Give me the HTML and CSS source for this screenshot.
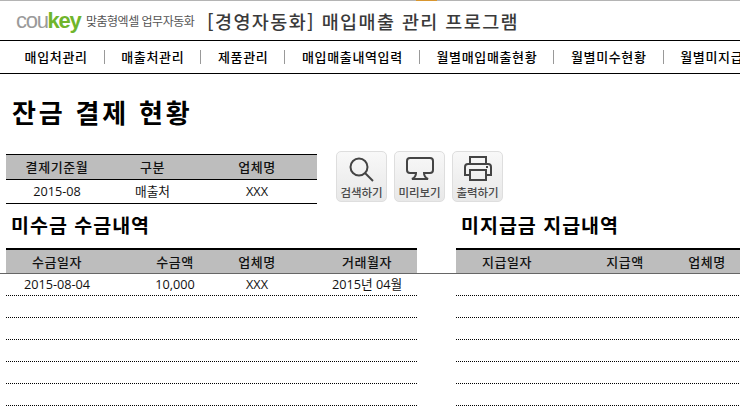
FILE: index.html
```html
<!DOCTYPE html>
<html lang="ko">
<head>
    <meta charset="UTF-8">
    <title>경영자동화</title>
    <link rel="stylesheet" href="styles.css">
</head>
<body>
    <div class="top_line"><div class="top_line_mark"></div></div>
    <div class="brand">
        <div class="brand_logo">cou<span>key</span></div>
        <div class="brand_sub">맞춤형엑셀 업무자동화</div>
        <div class="brand_title">[경영자동화] 매입매출 관리 프로그램</div>
    </div>
    <div class="menu">
        <div>매입처관리</div>
        <div>매출처관리</div>
        <div>제품관리</div>
        <div>매입매출내역입력</div>
        <div>월별매입매출현황</div>
        <div>월별미수현황</div>
        <div>월별미지급</div>
    </div>

    <h1 class="page_title">잔금 결제 현황</h1>

    <div class="filter">
        <div class="filter_table">
            <div class="filter_row filter_head">
                <div>결제기준월</div>
                <div>구분</div>
                <div>업체명</div>
            </div>
            <div class="filter_row">
                <div>2015-08</div>
                <div>매출처</div>
                <div>XXX</div>
            </div>
        </div>
        <div class="tools">
            <div class="tool">
                <svg width="30" height="30" viewBox="0 0 30 30"><circle cx="12" cy="12" r="8.500"/><path d="M18 18 L26 26"/></svg>
                <span>검색하기</span>
            </div>
            <div class="tool">
                <svg width="30" height="30" viewBox="0 0 30 30"><path d="M5 3 H25 Q28 3 28 6 V15 Q28 18 25 18 H19 Q19 22 23 24 H7 Q11 22 11 18 H5 Q2 18 2 15 V6 Q2 3 5 3 Z"/></svg>
                <span>미리보기</span>
            </div>
            <div class="tool">
                <svg width="30" height="30" viewBox="0 0 30 30"><path d="M7 9 V2 H23 V9"/><path d="M7 20 H2 V12 Q2 9 5 9 H25 Q28 9 28 12 V20 H23"/><path d="M7 15 H23 V25 H7 Z"/><path d="M23 12 H25"/></svg>
                <span>출력하기</span>
            </div>
        </div>
    </div>

    <div class="list_titles">
        <h2>미수금 수금내역</h2>
        <h2>미지급금 지급내역</h2>
    </div>
    <div class="list_heads">
        <div class="list_row list_head">
            <div>수금일자</div><div>수금액</div><div>업체명</div><div>거래월자</div>
        </div>
        <div class="list_row list_head">
            <div>지급일자</div><div>지급액</div><div>업체명</div><div></div>
        </div>
    </div>
    <div class="lists">
        <div class="list">
            <div class="list_row"><div>2015-08-04</div><div>10,000</div><div>XXX</div><div>2015년 04월</div></div>
            <div class="list_row"></div>
            <div class="list_row"></div>
            <div class="list_row"></div>
            <div class="list_row"></div>
            <div class="list_row"></div>
        </div>
        <div class="list">
            <div class="list_row"></div>
            <div class="list_row"></div>
            <div class="list_row"></div>
            <div class="list_row"></div>
            <div class="list_row"></div>
            <div class="list_row"></div>
        </div>
    </div>
</body>
</html>
```
FILE: styles.css
```css
html,body{
    margin: 0;
    height: 100%;
    overflow: hidden;
    background: #fff;
}

body{
    font-family: "Open Sans", "Noto Sans CJK KR", sans-serif;
    font-size: 12.7px;
    color: #111;
}

.top_line{
    height: 1px;
    background: #b4b4b4;
    padding-left: 416px;
}

.top_line_mark{
    width: 21px;
    height: 1px;
    background: #d8962f;
}

.brand{
    height: 39px;
    display: flex;
    align-items: center;
    padding-left: 16px;
}

.brand_logo{
    width: 70px;
    font-family: "Liberation Sans", sans-serif;
    font-size: 22px;
    letter-spacing: -1.3px;
    color: #9a9a9a;
}

.brand_logo span{
    color: #6fb52c;
    font-weight: bold;
}

.brand_sub{
    width: 121px;
    font-family: "Noto Sans CJK KR", sans-serif;
    font-size: 12px;
    letter-spacing: -0.5px;
    color: #555;
}

.brand_title{
    font-family: "Noto Sans CJK KR", sans-serif;
    font-size: 18.5px;
    font-weight: 500;
    letter-spacing: 1.4px;
    color: #3a3a3a;
    white-space: nowrap;
}

.menu{
    height: 32px;
    border-top: 1px solid #000;
    border-bottom: 1px solid #000;
    display: flex;
    align-items: center;
    padding-left: 8px;
    white-space: nowrap;
    font-family: "Noto Sans CJK KR", sans-serif;
    font-size: 13px;
    font-weight: 500;
    letter-spacing: 0.65px;
    color: #000;
}

.menu>div{
    height: 14px;
    line-height: 14px;
    padding: 0 16px 0 16.6px;
    border-right: 1px solid #999;
}

.menu>div:last-child{
    border-right: 0;
}

.page_title{
    margin: 0;
    height: 80px;
    padding: 22px 0 0 12px;
    box-sizing: border-box;
    font-family: "Noto Sans CJK KR", sans-serif;
    font-size: 26px;
    line-height: 32px;
    letter-spacing: 2.800px;
    color: #000;
}

.filter{
    display: flex;
    height: 59px;
    padding-left: 6px;
}

.filter_table{
    width: 311px;
    height: 48px;
    border-top: 1px solid #000;
    border-bottom: 1px solid #000;
}

.filter_row{
    display: grid;
    grid-template-columns: 102px 89px 120px;
    height: 22px;
    line-height: 22px;
    text-align: center;
}

.filter_head{
    height: 24px;
    line-height: 24px;
    background: #bdbdbd;
    border-bottom: 1px solid #000;
    font-family: "Noto Sans CJK KR", sans-serif;
    font-size: 13px;
    letter-spacing: 0.6px;
    font-weight: 500;
}

.tools{
    display: flex;
    gap: 7px;
    margin: -3px 0 0 19px;
    height: 51px;
}

.tool{
    width: 51px;
    height: 51px;
    box-sizing: border-box;
    border: 1px solid #dedede;
    border-radius: 5px;
    background: linear-gradient(#f8f8f8, #e8e8e8);
    display: flex;
    flex-direction: column;
    align-items: center;
    padding-top: 3px;
}

.tool svg{
    flex: none;
    fill: none;
    stroke: #444;
    stroke-width: 2;
}

.tool span{
    font-family: "Noto Sans CJK KR", sans-serif;
    font-size: 11.5px;
    line-height: 14px;
    font-weight: 500;
    letter-spacing: -0.1px;
    color: #4a4a4a;
    white-space: nowrap;
}

.list_titles{
    display: flex;
    height: 35px;
    padding-left: 11px;
}

.list_titles h2{
    width: 450px;
    flex: none;
    margin: 0;
    font-family: "Noto Sans CJK KR", sans-serif;
    font-size: 19.500px;
    line-height: 24px;
    letter-spacing: 1px;
    color: #000;
}

.list_heads{
    display: flex;
    gap: 39px;
    padding-left: 6px;
    border-bottom: 1px solid #666;
}

.list_row{
    display: grid;
    flex: none;
    width: 411px;
    box-sizing: border-box;
    height: 22px;
    line-height: 21px;
    grid-template-columns: 124px 90px 74px 123px;
    text-align: center;
    border-bottom: 1px dotted #000;
}

.list_row>div:first-child{
    padding-right: 22px;
}

.list_row>div:last-child{
    padding-left: 23px;
}

.list_head{
    height: 25px;
    line-height: 24px;
    background: #bdbdbd;
    border-top: 2px solid #000;
    border-bottom: 0;
    font-family: "Noto Sans CJK KR", sans-serif;
    font-size: 13px;
    letter-spacing: 0.6px;
    font-weight: 500;
}

.lists{
    display: flex;
    gap: 39px;
    padding-left: 6px;
}
```
